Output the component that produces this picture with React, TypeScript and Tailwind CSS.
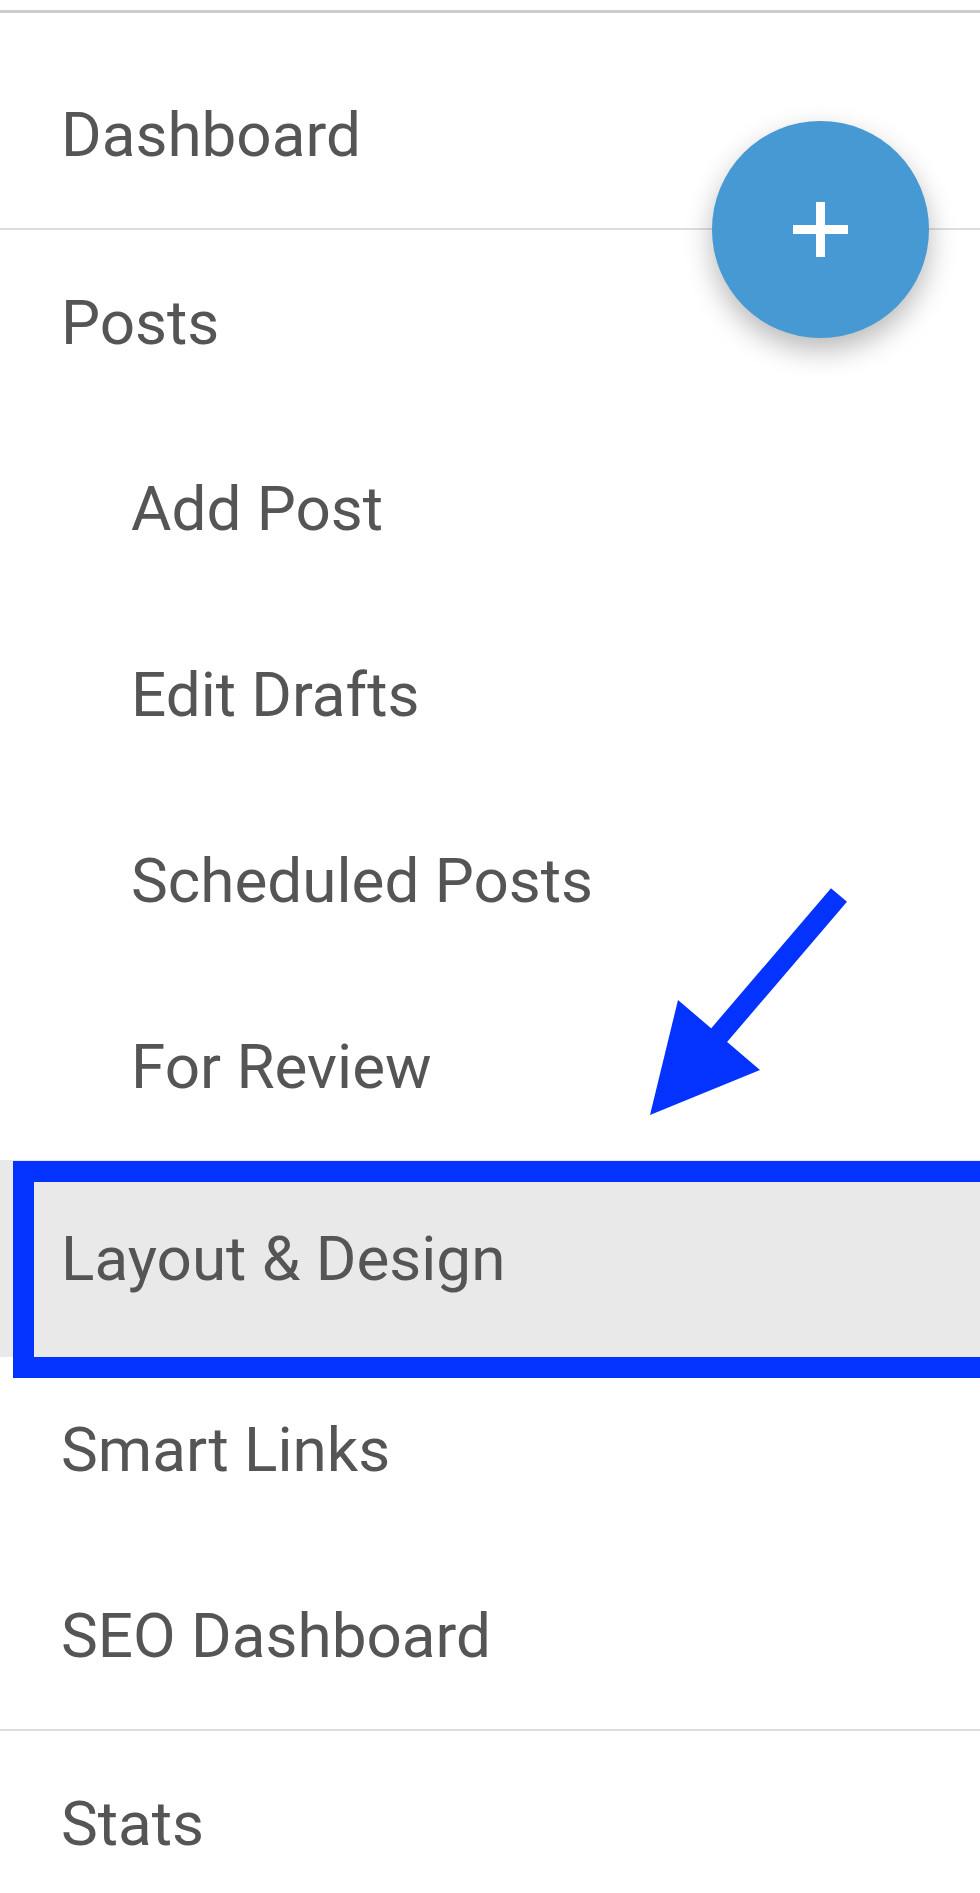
import React from "react";

function Row({ label, sub = false }: { label: string; sub?: boolean }) {
  return (
    <div
      className={
        "flex h-[186px] items-center text-[62px] leading-none text-[#555555] " +
        (sub ? "pl-[131px]" : "pl-[61px]")
      }
    >
      {label}
    </div>
  );
}

export default function App() {
  return (
    <div
      className="relative h-[1893px] w-[980px] overflow-hidden bg-white"
      style={{ fontFamily: "Roboto, 'Liberation Sans', sans-serif" }}
    >
      <div className="h-[10px]" />
      <div className="border-t-[3px] border-[#cbcbcb] pt-[29px]">
        <Row label="Dashboard" />
      </div>
      <div className="h-[2px] bg-[#dedede]" />
      <Row label="Posts" />
      <Row label="Add Post" sub />
      <Row label="Edit Drafts" sub />
      <Row label="Scheduled Posts" sub />
      <Row label="For Review" sub />
      <div className="flex h-[197px] items-center bg-[#e9e9e9] pl-[61px] text-[62px] leading-none text-[#555555]">
        Layout &amp; Design
      </div>
      <Row label="Smart Links" />
      <Row label="SEO Dashboard" />
      <div className="h-[2px] bg-[#dedede]" />
      <Row label="Stats" />

      {/* Floating action button */}
      <button className="absolute left-[712px] top-[121px] flex h-[217px] w-[217px] items-center justify-center rounded-full bg-[#4699d3] shadow-[0_12px_28px_rgba(0,0,0,0.28)]">
        <svg width="55" height="55" viewBox="0 0 55 55">
          <rect x="0" y="23" width="55" height="9" fill="white" />
          <rect x="23" y="0" width="9" height="55" fill="white" />
        </svg>
      </button>

      {/* Annotation box */}
      <div className="pointer-events-none absolute left-[13px] top-[1161px] h-[217px] w-[988px] border-[21px] border-[#0433ff]" />

      {/* Annotation arrow */}
      <svg
        className="pointer-events-none absolute left-0 top-0"
        width="980"
        height="1893"
        viewBox="0 0 980 1893"
      >
        <line x1="839" y1="895" x2="715" y2="1040" stroke="#0433ff" strokeWidth="21" />
        <polygon points="650,1115 678,1000 760,1070" fill="#0433ff" />
      </svg>
    </div>
  );
}
